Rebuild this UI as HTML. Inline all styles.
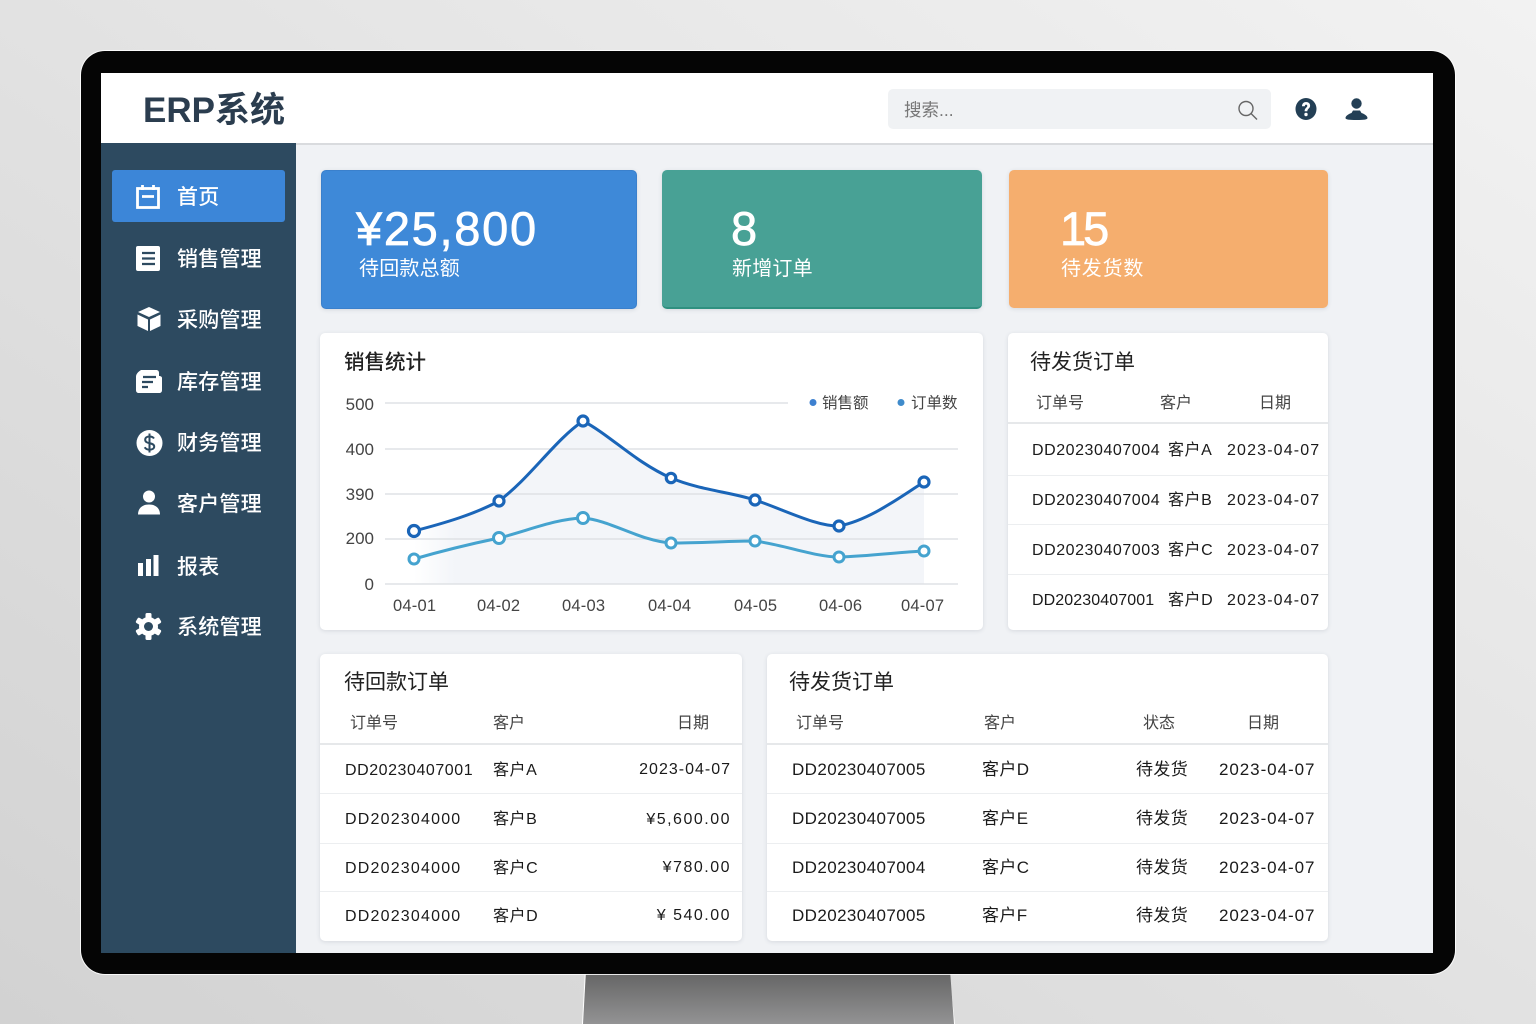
<!DOCTYPE html>
<html lang="zh-CN">
<head>
<meta charset="utf-8">
<title>ERP系统</title>
<style>
*{box-sizing:border-box;margin:0;padding:0}
html,body{width:1536px;height:1024px;overflow:hidden}
body{position:relative;background:linear-gradient(to top right,#d2d2d2,#f2f2f2);font-family:"Liberation Sans","Noto Sans CJK SC",sans-serif;color:#1f2933}
.b{position:absolute}
.t{position:absolute;white-space:nowrap;line-height:20px;height:20px}
.r{text-align:right}
.c{background:#fff;border-radius:5px;box-shadow:0 1px 4px rgba(40,55,75,.13)}
.nav{font-size:21px;color:#fff;letter-spacing:.2px;line-height:24px;height:24px;font-weight:500}
.ttl{font-size:21px;color:#222;line-height:28px;height:28px}
.h{font-size:16px;color:#444}
.d{font-size:16px;color:#1a1a1a;letter-spacing:.55px}
.e{font-size:16px;color:#1a1a1a;letter-spacing:1.15px}
.f{font-size:16px;color:#1a1a1a;letter-spacing:1.2px}
.g{font-size:16px;color:#1a1a1a;letter-spacing:1px}
.j{font-size:17px;color:#1a1a1a;letter-spacing:.4px}
.k{font-size:17px;color:#1a1a1a;letter-spacing:.94px}
.ln{position:absolute;height:1px;background:#eceef0}
.hl{position:absolute;height:2px;background:#e6e8ea}
.ax{font-size:17px;color:#444}
.ax2{font-size:16.5px;color:#444;letter-spacing:.2px}
.big{font-size:47px;color:#fff;line-height:50px;height:50px;font-weight:400;-webkit-text-stroke:.7px #fff}
.sub{font-size:20px;color:#fff;line-height:24px;height:24px;letter-spacing:.2px}
svg{position:absolute;overflow:visible}
</style>
</head>
<body>
<div class="b" style="left:580px;top:970px;width:378px;height:54px;background:#fff;clip-path:polygon(5px 0,369px 0,375px 100%,2px 100%)"></div>
<div class="b" style="left:580px;top:970px;width:378px;height:54px;background:linear-gradient(180deg,#626262 0,#939394 100%);clip-path:polygon(6px 0,370px 0,374px 100%,3px 100%)"></div>
<div class="b" style="left:81px;top:51px;width:1374px;height:923px;background:#050505;border-radius:24px;box-shadow:0 0 0 1px rgba(255,255,255,.85)"></div>
<div class="b" style="left:101px;top:73px;width:1332px;height:880px;background:#f0f2f5"></div>
<div class="b" style="left:101px;top:73px;width:1332px;height:72px;background:#fff;border-bottom:2px solid #d9dbde"></div>
<div class="b" style="left:101px;top:143px;width:195px;height:810px;background:#2d4a60"></div>

<div class="t" style="left:143px;top:91px;height:40px;line-height:40px;font-size:35px;font-weight:700;color:#2b3d4f">ERP系统</div>
<div class="b" style="left:888px;top:89px;width:383px;height:40px;background:#f0f2f4;border-radius:5px"></div>
<div class="t" style="left:904px;top:100px;font-size:17.500px;color:#777">搜索...</div>
<svg style="left:1236px;top:99px" width="24" height="24" viewBox="0 0 24 24" fill="none" stroke="#666" stroke-width="1.4"><circle cx="10" cy="9.500" r="7"/><path d="M15 14.500l6 6"/></svg>
<svg style="left:1294px;top:97px" width="24" height="24" viewBox="0 0 24 24"><ellipse cx="12" cy="12" rx="10.500" ry="11" fill="#233f55"/><path d="M8 9.300c0-2.600 1.800-4.300 4.100-4.300s4 1.500 4 3.600c0 2.800-2.800 3.100-2.800 5.700h-2.700c0-3.400 2.700-3.700 2.700-5.400 0-.8-.5-1.300-1.200-1.300s-1.300.7-1.300 1.700z" fill="#fff"/><circle cx="12" cy="17.500" r="1.700" fill="#fff"/></svg>
<svg style="left:1344px;top:97px" width="24" height="24" viewBox="0 0 24 24" fill="#233f55"><circle cx="12.500" cy="6.500" r="5.200"/><path d="M1.500 21c0-2 3-4 6-5l1.500-2.500h7l1.500 2.500c3 1 6 3 6 5 0 1.500-3 2-11 2s-11-.5-11-2z"/></svg>

<div class="b" style="left:112px;top:170px;width:173px;height:52px;background:#3c86d8;border-radius:3px"></div>
<svg style="left:135px;top:184px" width="26" height="26" viewBox="0 0 26 26" fill="none" stroke="#fff" stroke-width="2.800"><rect x="2.500" y="4.500" width="21" height="19"/><path d="M7.500 1v5M18.500 1v5M7 12.500h12"/></svg>
<div class="t nav" style="left:177px;top:186px">首页</div>
<svg style="left:135px;top:245px" width="26" height="26" viewBox="0 0 26 26"><rect x="1" y="1" width="24" height="25" rx="2" fill="#fff"/><path d="M7 8h13M7 13.500h13M7 19h13" stroke="#2d4a60" stroke-width="2.200"/></svg>
<div class="t nav" style="left:177px;top:248px">销售管理</div>
<svg style="left:136px;top:306px" width="26" height="26" viewBox="0 0 26 26" fill="#fff"><path d="M13 1l11 5-11 5L2 6z"/><path d="M1.500 8.500l10.500 5v11.500l-10.500-5z"/><path d="M24.500 8.500l-10.500 5v11.500l10.500-5z"/></svg>
<div class="t nav" style="left:177px;top:309px">采购管理</div>
<svg style="left:136px;top:369px" width="26" height="26" viewBox="0 0 26 26"><path d="M5 1h15c2 0 3 1 3 3v3c2 0 3 1 3 2v12c0 2-1 3-3 3H3c-2 0-3-1-3-3V8c0-3 2-5 5-7z" fill="#fff"/><path d="M7 8h13M6 13h11M6 18h6" stroke="#2d4a60" stroke-width="2.200"/></svg>
<div class="t nav" style="left:177px;top:371px">库存管理</div>
<svg style="left:136px;top:429px" width="27" height="28" viewBox="0 0 27 28"><circle cx="13.500" cy="14" r="13" fill="#fff"/><path d="M18 9.500c-1-1.500-2.500-2-4.500-2-2.500 0-4.300 1.200-4.300 3.200 0 4.800 9 2.300 9 6.800 0 2-1.900 3.200-4.500 3.200-2.200 0-4-.8-5-2.500M13.500 4.500v19" fill="none" stroke="#2d4a60" stroke-width="2"/></svg>
<div class="t nav" style="left:177px;top:432px">财务管理</div>
<svg style="left:136px;top:490px" width="26" height="26" viewBox="0 0 26 26" fill="#fff"><circle cx="13" cy="6.500" r="6"/><path d="M2 24.500c0-6 4-10 11-10s11 4 11 10z"/></svg>
<div class="t nav" style="left:177px;top:493px">客户管理</div>
<svg style="left:137px;top:554px" width="24" height="24" viewBox="0 0 24 24" fill="#fff"><rect x="1" y="9" width="5" height="13"/><rect x="9" y="5" width="5" height="17"/><rect x="16.500" y="1" width="5" height="21"/></svg>
<div class="t nav" style="left:177px;top:556px">报表</div>
<svg style="left:135px;top:613px" width="27" height="27" viewBox="0 0 27 27"><g fill="#fff"><circle cx="13.500" cy="13.500" r="9.500"/><rect x="10.500" y="0" width="6" height="27" rx="1.500"/><rect x="10.500" y="0" width="6" height="27" rx="1.500" transform="rotate(60 13.500 13.500)"/><rect x="10.500" y="0" width="6" height="27" rx="1.500" transform="rotate(120 13.500 13.500)"/></g><circle cx="13.500" cy="13.500" r="4.500" fill="#2d4a60"/></svg>
<div class="t nav" style="left:177px;top:616px">系统管理</div>

<div class="b c" style="left:321px;top:170px;width:316px;height:139px;background:#3e89d8;border:1px solid #3a80cc"></div>
<div class="b c" style="left:662px;top:170px;width:320px;height:139px;background:#48a195;border-bottom:2px solid #2f9080"></div>
<div class="b c" style="left:1009px;top:170px;width:319px;height:138px;background:#f5ae6e"></div>
<div class="t big" style="left:356px;top:204px;letter-spacing:1.700px">¥25,800</div>
<div class="t sub" style="left:359px;top:257px">待回款总额</div>
<div class="t big" style="left:731px;top:204px">8</div>
<div class="t sub" style="left:732px;top:257px">新增订单</div>
<div class="t big" style="left:1060px;top:204px;letter-spacing:-3px">15</div>
<div class="t sub" style="left:1061px;top:257px;letter-spacing:.8px">待发货数</div>

<div class="b c" style="left:320px;top:333px;width:663px;height:297px"></div>
<div class="t ttl" style="left:344px;top:349px;font-size:20.500px;font-weight:500">销售统计</div>
<svg style="left:0;top:0" width="1536" height="1024" viewBox="0 0 1536 1024" fill="none">
<defs><linearGradient id="af" x1="0" x2="1" y1="0" y2="0"><stop offset="0" stop-color="#f3f5f9" stop-opacity="0"/><stop offset=".08" stop-color="#f3f5f9"/><stop offset="1" stop-color="#f3f5f9"/></linearGradient></defs>
<path d="M414 531C445 523 475 514 499 501C530 478 555 440 583 421C610 435 635 462 671 478C700 490 730 492 755 500C785 510 815 526 839 526C870 520 900 497 924 482V584H414Z" fill="url(#af)"/>
<g stroke="#dfe2e5" stroke-width="1.500"><path d="M385 403H788M385 449H958M385 494H958M385 539H958M385 584H958"/></g>
<path d="M414 559C445 550 475 543 499 538C530 530 555 519 583 518C610 520 640 541 671 543C700 543 730 541 755 541C785 545 815 557 839 557C870 556 900 552 924 551" stroke="#45a3cf" stroke-width="3"/>
<path d="M414 531C445 523 475 514 499 501C530 478 555 440 583 421C610 435 635 462 671 478C700 490 730 492 755 500C785 510 815 526 839 526C870 520 900 497 924 482" stroke="#1a65b8" stroke-width="3"/>
<g fill="#fff" stroke="#45a3cf" stroke-width="3"><circle cx="414" cy="559" r="5"/><circle cx="499" cy="538" r="5.500"/><circle cx="583" cy="518" r="5.500"/><circle cx="671" cy="543" r="5"/><circle cx="755" cy="541" r="5"/><circle cx="839" cy="557" r="5"/><circle cx="924" cy="551" r="5"/></g>
<g fill="#fff" stroke="#1a65b8" stroke-width="3.200"><circle cx="414" cy="531" r="5.500"/><circle cx="499" cy="501" r="5"/><circle cx="583" cy="421" r="5"/><circle cx="671" cy="478" r="4.700"/><circle cx="755" cy="500" r="5"/><circle cx="839" cy="526" r="5"/><circle cx="924" cy="482" r="5"/></g>
<circle cx="813" cy="402.500" r="3.500" fill="#3d80d0"/><circle cx="901" cy="402.500" r="3.500" fill="#3f8bcb"/>
</svg>
<div class="t" style="left:822px;top:394px;font-size:15.500px;color:#444">销售额</div>
<div class="t" style="left:911px;top:394px;font-size:15.500px;color:#444">订单数</div>
<div class="t ax r" style="left:334px;top:395px;width:40px">500</div>
<div class="t ax r" style="left:334px;top:440px;width:40px">400</div>
<div class="t ax r" style="left:334px;top:485px;width:40px">390</div>
<div class="t ax r" style="left:334px;top:529px;width:40px">200</div>
<div class="t ax r" style="left:334px;top:575px;width:40px">0</div>
<div class="t ax2" style="left:393px;top:596px">04-01</div>
<div class="t ax2" style="left:477px;top:596px">04-02</div>
<div class="t ax2" style="left:562px;top:596px">04-03</div>
<div class="t ax2" style="left:648px;top:596px">04-04</div>
<div class="t ax2" style="left:734px;top:596px">04-05</div>
<div class="t ax2" style="left:819px;top:596px">04-06</div>
<div class="t ax2" style="left:901px;top:596px">04-07</div>

<div class="b c" style="left:1008px;top:333px;width:320px;height:297px"></div>
<div class="t ttl" style="left:1030px;top:349px">待发货订单</div>
<div class="t h" style="left:1036px;top:394px">订单号</div>
<div class="t h" style="left:1160px;top:394px">客户</div>
<div class="t h" style="left:1259px;top:394px">日期</div>
<div class="hl" style="left:1008px;top:422px;width:320px"></div>
<div class="ln" style="left:1008px;top:475px;width:320px"></div>
<div class="ln" style="left:1008px;top:524px;width:320px"></div>
<div class="ln" style="left:1008px;top:574px;width:320px"></div>
<div class="t d" style="left:1032px;top:441px">DD20230407004</div><div class="t d" style="left:1168px;top:441px">客户A</div><div class="t e" style="left:1227px;top:441px">2023-04-07</div>
<div class="t d" style="left:1032px;top:491px">DD20230407004</div><div class="t d" style="left:1168px;top:491px">客户B</div><div class="t e" style="left:1227px;top:491px">2023-04-07</div>
<div class="t d" style="left:1032px;top:541px">DD20230407003</div><div class="t d" style="left:1168px;top:541px">客户C</div><div class="t e" style="left:1227px;top:541px">2023-04-07</div>
<div class="t d" style="left:1032px;top:591px;letter-spacing:.1px">DD20230407001</div><div class="t d" style="left:1168px;top:591px">客户D</div><div class="t e" style="left:1227px;top:591px">2023-04-07</div>

<div class="b c" style="left:320px;top:654px;width:422px;height:287px"></div>
<div class="t ttl" style="left:344px;top:669px">待回款订单</div>
<div class="t h" style="left:350px;top:714px">订单号</div>
<div class="t h" style="left:493px;top:714px">客户</div>
<div class="t h" style="left:677px;top:714px">日期</div>
<div class="hl" style="left:320px;top:743px;width:422px"></div>
<div class="ln" style="left:320px;top:793px;width:422px"></div>
<div class="ln" style="left:320px;top:843px;width:422px"></div>
<div class="ln" style="left:320px;top:891px;width:422px"></div>
<div class="t d" style="left:345px;top:761px">DD20230407001</div><div class="t d" style="left:493px;top:761px">客户A</div><div class="t e r" style="left:590px;top:760px;width:141px;letter-spacing:1px">2023-04-07</div>
<div class="t f" style="left:345px;top:810px">DD202304000</div><div class="t d" style="left:493px;top:810px">客户B</div><div class="t g r" style="left:590px;top:810px;width:141px;letter-spacing:1.500px">¥5,600.00</div>
<div class="t f" style="left:345px;top:859px">DD202304000</div><div class="t d" style="left:493px;top:859px">客户C</div><div class="t g r" style="left:590px;top:858px;width:141px;letter-spacing:1.500px">¥780.00</div>
<div class="t f" style="left:345px;top:907px">DD202304000</div><div class="t d" style="left:493px;top:907px">客户D</div><div class="t g r" style="left:590px;top:906px;width:141px;letter-spacing:1.500px">¥ 540.00</div>

<div class="b c" style="left:767px;top:654px;width:561px;height:287px"></div>
<div class="t ttl" style="left:789px;top:669px">待发货订单</div>
<div class="t h" style="left:796px;top:714px">订单号</div>
<div class="t h" style="left:984px;top:714px">客户</div>
<div class="t h" style="left:1143px;top:714px">状态</div>
<div class="t h" style="left:1247px;top:714px">日期</div>
<div class="hl" style="left:767px;top:743px;width:561px"></div>
<div class="ln" style="left:767px;top:793px;width:561px"></div>
<div class="ln" style="left:767px;top:843px;width:561px"></div>
<div class="ln" style="left:767px;top:891px;width:561px"></div>
<div class="t j" style="left:792px;top:760px">DD20230407005</div><div class="t j" style="left:982px;top:760px">客户D</div><div class="t j" style="left:1136px;top:760px">待发货</div><div class="t k" style="left:1219px;top:760px">2023-04-07</div>
<div class="t j" style="left:792px;top:809px">DD20230407005</div><div class="t j" style="left:982px;top:809px">客户E</div><div class="t j" style="left:1136px;top:809px">待发货</div><div class="t k" style="left:1219px;top:809px">2023-04-07</div>
<div class="t j" style="left:792px;top:858px">DD20230407004</div><div class="t j" style="left:982px;top:858px">客户C</div><div class="t j" style="left:1136px;top:858px">待发货</div><div class="t k" style="left:1219px;top:858px">2023-04-07</div>
<div class="t j" style="left:792px;top:906px">DD20230407005</div><div class="t j" style="left:982px;top:906px">客户F</div><div class="t j" style="left:1136px;top:906px">待发货</div><div class="t k" style="left:1219px;top:906px">2023-04-07</div>
</body>
</html>
